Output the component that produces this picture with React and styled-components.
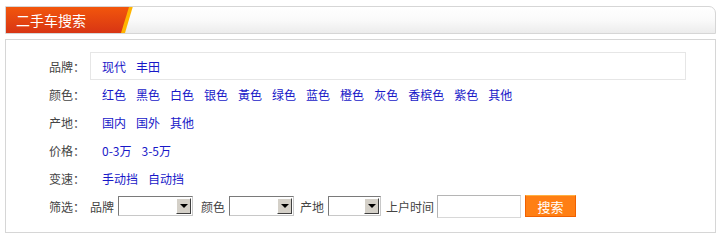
import React from 'react';
import styled, { createGlobalStyle } from 'styled-components';

const Global = createGlobalStyle`
body{margin:0;background:#fff;font-family:"Noto Sans CJK SC","Microsoft YaHei",sans-serif;font-size:12px;}
`

const Wrap = styled.div`
width:711px;
margin:6px 0 0 5px;`

const Head = styled.div`
display:flex;
height:26px;
border:1px solid #d6d6d6;
border-top-right-radius:7px;
background:linear-gradient(#ffffff 0%,#fafafa 50%,#ececec 100%);
overflow:hidden;`

const TabEdge = styled.div`
width:128px;
height:100%;
margin:-1px 0 0 -1px;
padding-top:1px;
background:#ffb400;
clip-path:polygon(0 0,100% 0,calc(100% - 8px) 100%,0 100%);`

const Tab = styled.div`
height:100%;
display:flex;
align-items:center;
padding-left:11px;
color:#fff;
font-size:14px;
background:linear-gradient(#f2560c,#d83514);
clip-path:polygon(0 0,calc(100% - 4px) 0,calc(100% - 12px) 100%,0 100%);`

const Box = styled.div`
margin-top:5px;
border:1px solid #d6d6d6;
padding:12px 0 12px 43px;`

const Row = styled.div`
display:flex;
align-items:center;
height:28px;`

const Label = styled.span`
width:41px;
flex:none;
color:#444;`

const Links = styled.div`
display:flex;
align-items:center;
height:${p=>p.boxed?'26px':'auto'};
width:${p=>p.boxed?'583px':'auto'};
padding-left:${p=>p.boxed?'11px':'12px'};
border:${p=>p.boxed?'1px solid #e6e6e6':'none'};`

const Item = styled.a`
color:#1818c8;
text-decoration:none;
margin-right:10px;
cursor:pointer;`

const Field = styled.span`
color:#444;
margin:0 ${p=>p.after}px 0 ${p=>p.before}px;`

const Select = styled.div`
display:flex;
justify-content:flex-end;
align-items:center;
box-sizing:border-box;
width:${p=>p.w}px;
height:20px;
padding:1px;
border:1px solid #7a7a7a;
border-right-color:#c8c8c8;
border-bottom-color:#c8c8c8;
background:#fff;`

const Arrow = styled.div`
width:15px;
height:16px;
box-sizing:border-box;
display:flex;
align-items:center;
justify-content:center;
background:#d4d0c8;
border:1px solid;
border-color:#fff #404040 #404040 #fff;
&::after{
content:'';
border-left:4px solid transparent;
border-right:4px solid transparent;
border-top:4px solid #000;
}`

const Input = styled.input`
box-sizing:border-box;
width:84px;
height:23px;
margin:0;
border:1px solid #b5b5b5;
border-right-color:#d8d8d8;
border-bottom-color:#d8d8d8;
outline:none;`

const Button = styled.button`
box-sizing:border-box;
width:51px;
height:22px;
margin-left:4px;
padding:0;
border:1px solid #f06000;
border-top-color:#ffb040;
background:#ff7f14;
color:#fff;
font-family:inherit;
font-size:13px;`

const rows = [
  { label:'颜色：', items:['红色','黑色','白色','银色','黃色','绿色','蓝色','橙色','灰色','香槟色','紫色','其他'] },
  { label:'产地：', items:['国内','国外','其他'] },
  { label:'价格：', items:['0-3万','3-5万'] },
  { label:'变速：', items:['手动挡','自动挡'] },
]

const App = () => (
  <Wrap>
    <Global/>
    <Head>
      <TabEdge><Tab>二手车搜索</Tab></TabEdge>
    </Head>
    <Box>
      <Row>
        <Label>品牌：</Label>
        <Links boxed>
          <Item>现代</Item>
          <Item>丰田</Item>
        </Links>
      </Row>
      {rows.map(r=>(
        <Row key={r.label}>
          <Label>{r.label}</Label>
          <Links>
            {r.items.map(i=><Item key={i}>{i}</Item>)}
          </Links>
        </Row>
      ))}
      <Row>
        <Label>筛选：</Label>
        <Field before={0} after={4}>品牌</Field>
        <Select w={75}><Arrow/></Select>
        <Field before={8} after={4}>颜色</Field>
        <Select w={65}><Arrow/></Select>
        <Field before={6} after={4}>产地</Field>
        <Select w={53}><Arrow/></Select>
        <Field before={5} after={3}>上户时间</Field>
        <Input/>
        <Button>搜索</Button>
      </Row>
    </Box>
  </Wrap>
);

export default App;
